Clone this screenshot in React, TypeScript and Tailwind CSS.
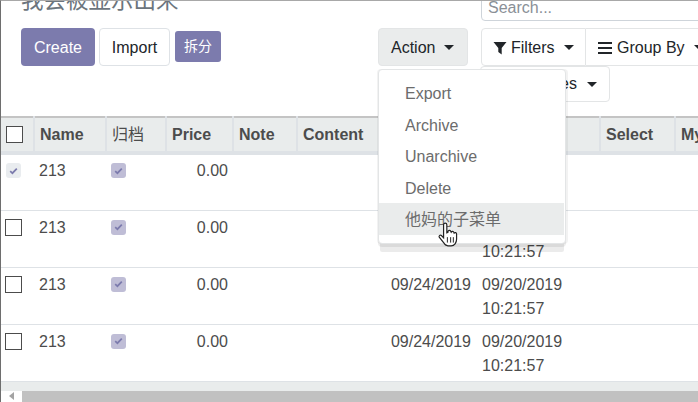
const cols = [33, 72, 60, 67, 64, 84, 96, 123, 75, 200];
const heads = ["", "Name", "归档", "Price", "Note", "Content", "", "", "Select", "My"];

function Caret({ className = "" }: { className?: string }) {
  return <span className={`inline-block w-0 h-0 border-x-[5px] border-x-transparent border-t-[5px] border-t-[#212529] ${className}`} />;
}

function Check({ light = false }: { light?: boolean }) {
  return (
    <span className={`flex w-[15px] h-[15px] items-center justify-center rounded-[3px] ${light ? "bg-[#e9ecef]" : "bg-[#bfbdd6]"}`}>
      <svg width="9" height="8" viewBox="0 0 9 8">
        <path d="M1.2 4.2 L3.4 6.2 L7.8 1.6" fill="none" stroke="#7c7bad" strokeWidth="1.7" />
      </svg>
    </span>
  );
}

function Box() {
  return <span className="block w-[17px] h-[17px] border border-[#4c4c4c] bg-white" />;
}

function Row({ first, date, time }: { first?: boolean; date?: string; time?: boolean }) {
  return (
    <tr className="h-[57px] border-b border-[#dee2e6] align-top text-[#4c4c4c]">
      <td className="pl-[4px] pt-[8px]">{first ? <span className="block ml-px"><Check light /></span> : <Box />}</td>
      <td className={`pl-[5px] leading-[24px] ${first ? "pt-[4px]" : "pt-[5px]"}`}>213</td>
      <td className={`pl-[5px] ${first ? "pt-[8px]" : "pt-[9px]"}`}><Check /></td>
      <td className={`pr-[5px] text-right leading-[24px] ${first ? "pt-[4px]" : "pt-[5px]"}`}>0.00</td>
      <td />
      <td />
      <td className="pr-[6px] pt-[5px] text-right leading-[24px] whitespace-nowrap">{date}</td>
      <td className="pl-[5px] pt-[5px] leading-[24px]">
        {time ? <>09/20/2019<br />10:21:57</> : null}
      </td>
      <td />
      <td />
    </tr>
  );
}

export default function App() {
  return (
    <div className="relative w-[698px] h-[402px] overflow-hidden bg-white border-t border-l border-t-[#a8a8a8] border-l-[#6e6e6e] text-[16px] text-[#212529] font-['Liberation_Sans','Noto_Sans_CJK_SC',sans-serif]">
      <div className="h-[115px] relative">
        <div className="flex h-[20px]">
          <h1 className="pl-5 w-[480px] shrink-0 -mt-[12px] h-[24px] text-[22.5px] leading-[24px] text-[#6c757d] font-normal whitespace-nowrap">我会被显示出来</h1>
          <div className="-mt-[4px] h-[24px] w-[230px] border border-[#ced4da] rounded-[4px] pl-[6px] text-[#8a9097] leading-[20px] shrink-0">Search...</div>
        </div>
        <div className="flex mt-[7px] items-start">
          <button className="ml-5 h-[38px] w-[74px] pt-px rounded-[4px] bg-[#7c7bad] text-white shrink-0">Create</button>
          <button className="ml-[4px] h-[38px] w-[71px] pt-px rounded-[4px] border border-[#dee2e6] bg-white text-[#212529] shrink-0">Import</button>
          <button className="ml-[5px] mt-[3px] h-[31px] w-[46px] rounded-[3px] bg-[#7c7bad] text-white text-[14px] shrink-0">拆分</button>
          <button className="ml-[157px] h-[38px] w-[90px] pt-px flex items-center pl-[12px] rounded-[4px] border border-[#e3e5e6] bg-[#eaecec] text-[#212529] shrink-0">
            Action<Caret className="ml-[9px]" />
          </button>
          <div className="ml-[13px] w-[235px] shrink-0">
            <div className="flex">
              <button className="h-[38px] w-[105px] pt-px flex items-center pl-[11px] rounded-l-[4px] border border-[#e3e5e6] bg-white shrink-0">
                <svg width="14" height="14" viewBox="0 0 14 14" className="mr-[4px]"><path d="M0.5 1h13L8.700 7v6.500L5.300 11V7z" fill="#212529" /></svg>
                Filters<Caret className="ml-[9px]" />
              </button>
              <button className="h-[38px] w-[130px] pt-px flex items-center pl-[12px] border border-l-0 border-[#e3e5e6] bg-white whitespace-nowrap shrink-0">
                <span className="mr-[5px] w-[14px] h-[12px] border-y-2 border-[#212529] flex items-center"><span className="block w-full h-[2px] bg-[#212529]" /></span>
                Group By<Caret className="ml-[9px]" />
              </button>
            </div>
            <button className="-ml-[1px] h-[36px] w-[130px] flex items-center justify-end pr-[12px] rounded-[4px] border border-[#e3e5e6] bg-white">
              es<Caret className="ml-[10px]" />
            </button>
          </div>
        </div>
      </div>

      <table className="table-fixed w-[874px] border-collapse text-[16px]">
        <colgroup>
          {cols.map((w, i) => <col key={i} style={{ width: w }} />)}
        </colgroup>
        <thead>
          <tr className="h-[36px] bg-[#e9ecec] border-t-2 border-b-[4px] border-t-[#c4c4c4] border-b-[#dee2e6] text-[#4c4c4c] font-bold">
            {heads.map((h, i) => (
              <th key={i} className={`text-left pl-[5px] ${h === "归档" ? "font-normal" : "font-bold"} ${i < 9 ? "border-r-2 border-r-[#dee2e6]" : ""}`}>
                {i === 0 ? <Box /> : h}
              </th>
            ))}
          </tr>
        </thead>
        <tbody>
          <Row first />
          <Row time />
          <Row date="09/24/2019" time />
          <Row date="09/24/2019" time />
        </tbody>
      </table>

      <div className="h-[9px] bg-[#e9ecec]" />
      <div className="flex h-[11px] bg-white">
        <div className="w-[21px] flex items-center justify-center">
          <span className="w-0 h-0 border-y-[4px] border-y-transparent border-r-[5px] border-r-[#a3a3a3]" />
        </div>
        <div className="flex-1 bg-[#c1c1c1]" />
      </div>

      <div className="absolute left-[377px] top-[68px] w-[188px] h-[175px] bg-white border border-[#e3e5e6] rounded-[4px] shadow-[0_3px_0_rgba(0,0,0,0.07),0_10px_0_-2px_rgba(0,0,0,0.08),2px_0_0_rgba(0,0,0,0.05),-1px_0_0_rgba(0,0,0,0.05)] text-[#6c6c6c] pt-[7px]">
        {["Export", "Archive", "Unarchive", "Delete"].map((t) => (
          <div key={t} className="h-[31.5px] pl-[26px] leading-[33px]">{t}</div>
        ))}
        <div className="h-[31.5px] pl-[26px] mr-px leading-[33px] bg-[#eaecec]">他妈的子菜单</div>
      </div>

      <svg className="absolute left-[436px] top-[221px]" width="24" height="26" viewBox="0 0 22 24">
        <path d="M6 2.500a1.500 1.500 0 0 1 3 0V10l1-.5V8.800a1.400 1.400 0 0 1 2.600-.3l.4.9a1.400 1.400 0 0 1 2.500.2l.2.6a1.300 1.300 0 0 1 2.300.8V16c0 3-2 6-5 6H10c-2 0-3-1-4-3L2 14c-.7-1.300.9-2.600 2-1.500L6 14.500z" fill="#fff" stroke="#222" strokeWidth="1.100" />
        <path d="M9.500 14v5M12.500 14v5M15 14v5" stroke="#222" strokeWidth="0.900" />
      </svg>
    </div>
  );
}
